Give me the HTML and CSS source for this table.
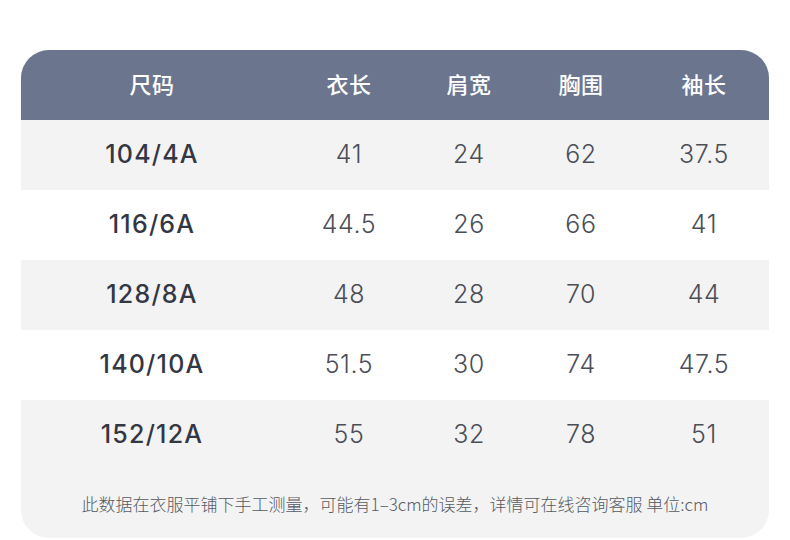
FILE: index.html
```html
<!DOCTYPE html>
<html lang="zh">
<head>
<meta charset="utf-8">
<link rel="stylesheet" href="styles.css">
</head>
<body>
<div class="card">
  <div class="row head">
    <div>尺码</div><div>衣长</div><div>肩宽</div><div>胸围</div><div>袖长</div>
  </div>
  <div class="row gray"><div class="size">104/4A</div><div>41</div><div>24</div><div>62</div><div>37.5</div></div>
  <div class="row white"><div class="size">116/6A</div><div>44.5</div><div>26</div><div>66</div><div>41</div></div>
  <div class="row gray"><div class="size">128/8A</div><div>48</div><div>28</div><div>70</div><div>44</div></div>
  <div class="row white"><div class="size">140/10A</div><div>51.5</div><div>30</div><div>74</div><div>47.5</div></div>
  <div class="row gray"><div class="size">152/12A</div><div>55</div><div>32</div><div>78</div><div>51</div></div>
  <div class="note">此数据在衣服平铺下手工测量，可能有1–3cm的误差，详情可在线咨询客服 单位:cm</div>
</div>
</body>
</html>
```

FILE: styles.css
```css
html, body {
  margin: 0;
  padding: 0;
  background: #ffffff;
}
body {
  font-family: Inter, "Noto Sans CJK SC", sans-serif;
  padding: 50px 0 0 21px;
}
.card {
  width: 748px;
  height: 488px;
  border-radius: 28px;
  overflow: hidden;
  background: #f3f3f3;
}
.row {
  display: grid;
  grid-template-columns: 262px 132px 108px 116px 130px;
  height: 70px;
  align-items: center;
  text-align: center;
  font-size: 25px;
  font-weight: 300;
  color: #4a4e57;
  letter-spacing: 0.6px;
  padding-bottom: 2px;
  box-sizing: border-box;
}
.head {
  background: #6b768e;
  color: #ffffff;
  font-size: 22px;
  font-weight: 500;
  letter-spacing: 0.5px;
  font-family: "Noto Sans CJK SC", sans-serif;
  padding-bottom: 4px;
}
.gray { background: #f3f3f3; }
.white { background: #ffffff; }
.size {
  font-weight: 500;
  font-size: 25px;
  color: #333744;
  letter-spacing: 1.2px;
}
.note {
  height: 68px;
  display: flex;
  align-items: center;
  justify-content: center;
  font-size: 17px;
  font-weight: 300;
  color: #555a62;
  font-family: "Noto Sans CJK SC", sans-serif;
  padding-bottom: 2px;
  box-sizing: border-box;
}
```
